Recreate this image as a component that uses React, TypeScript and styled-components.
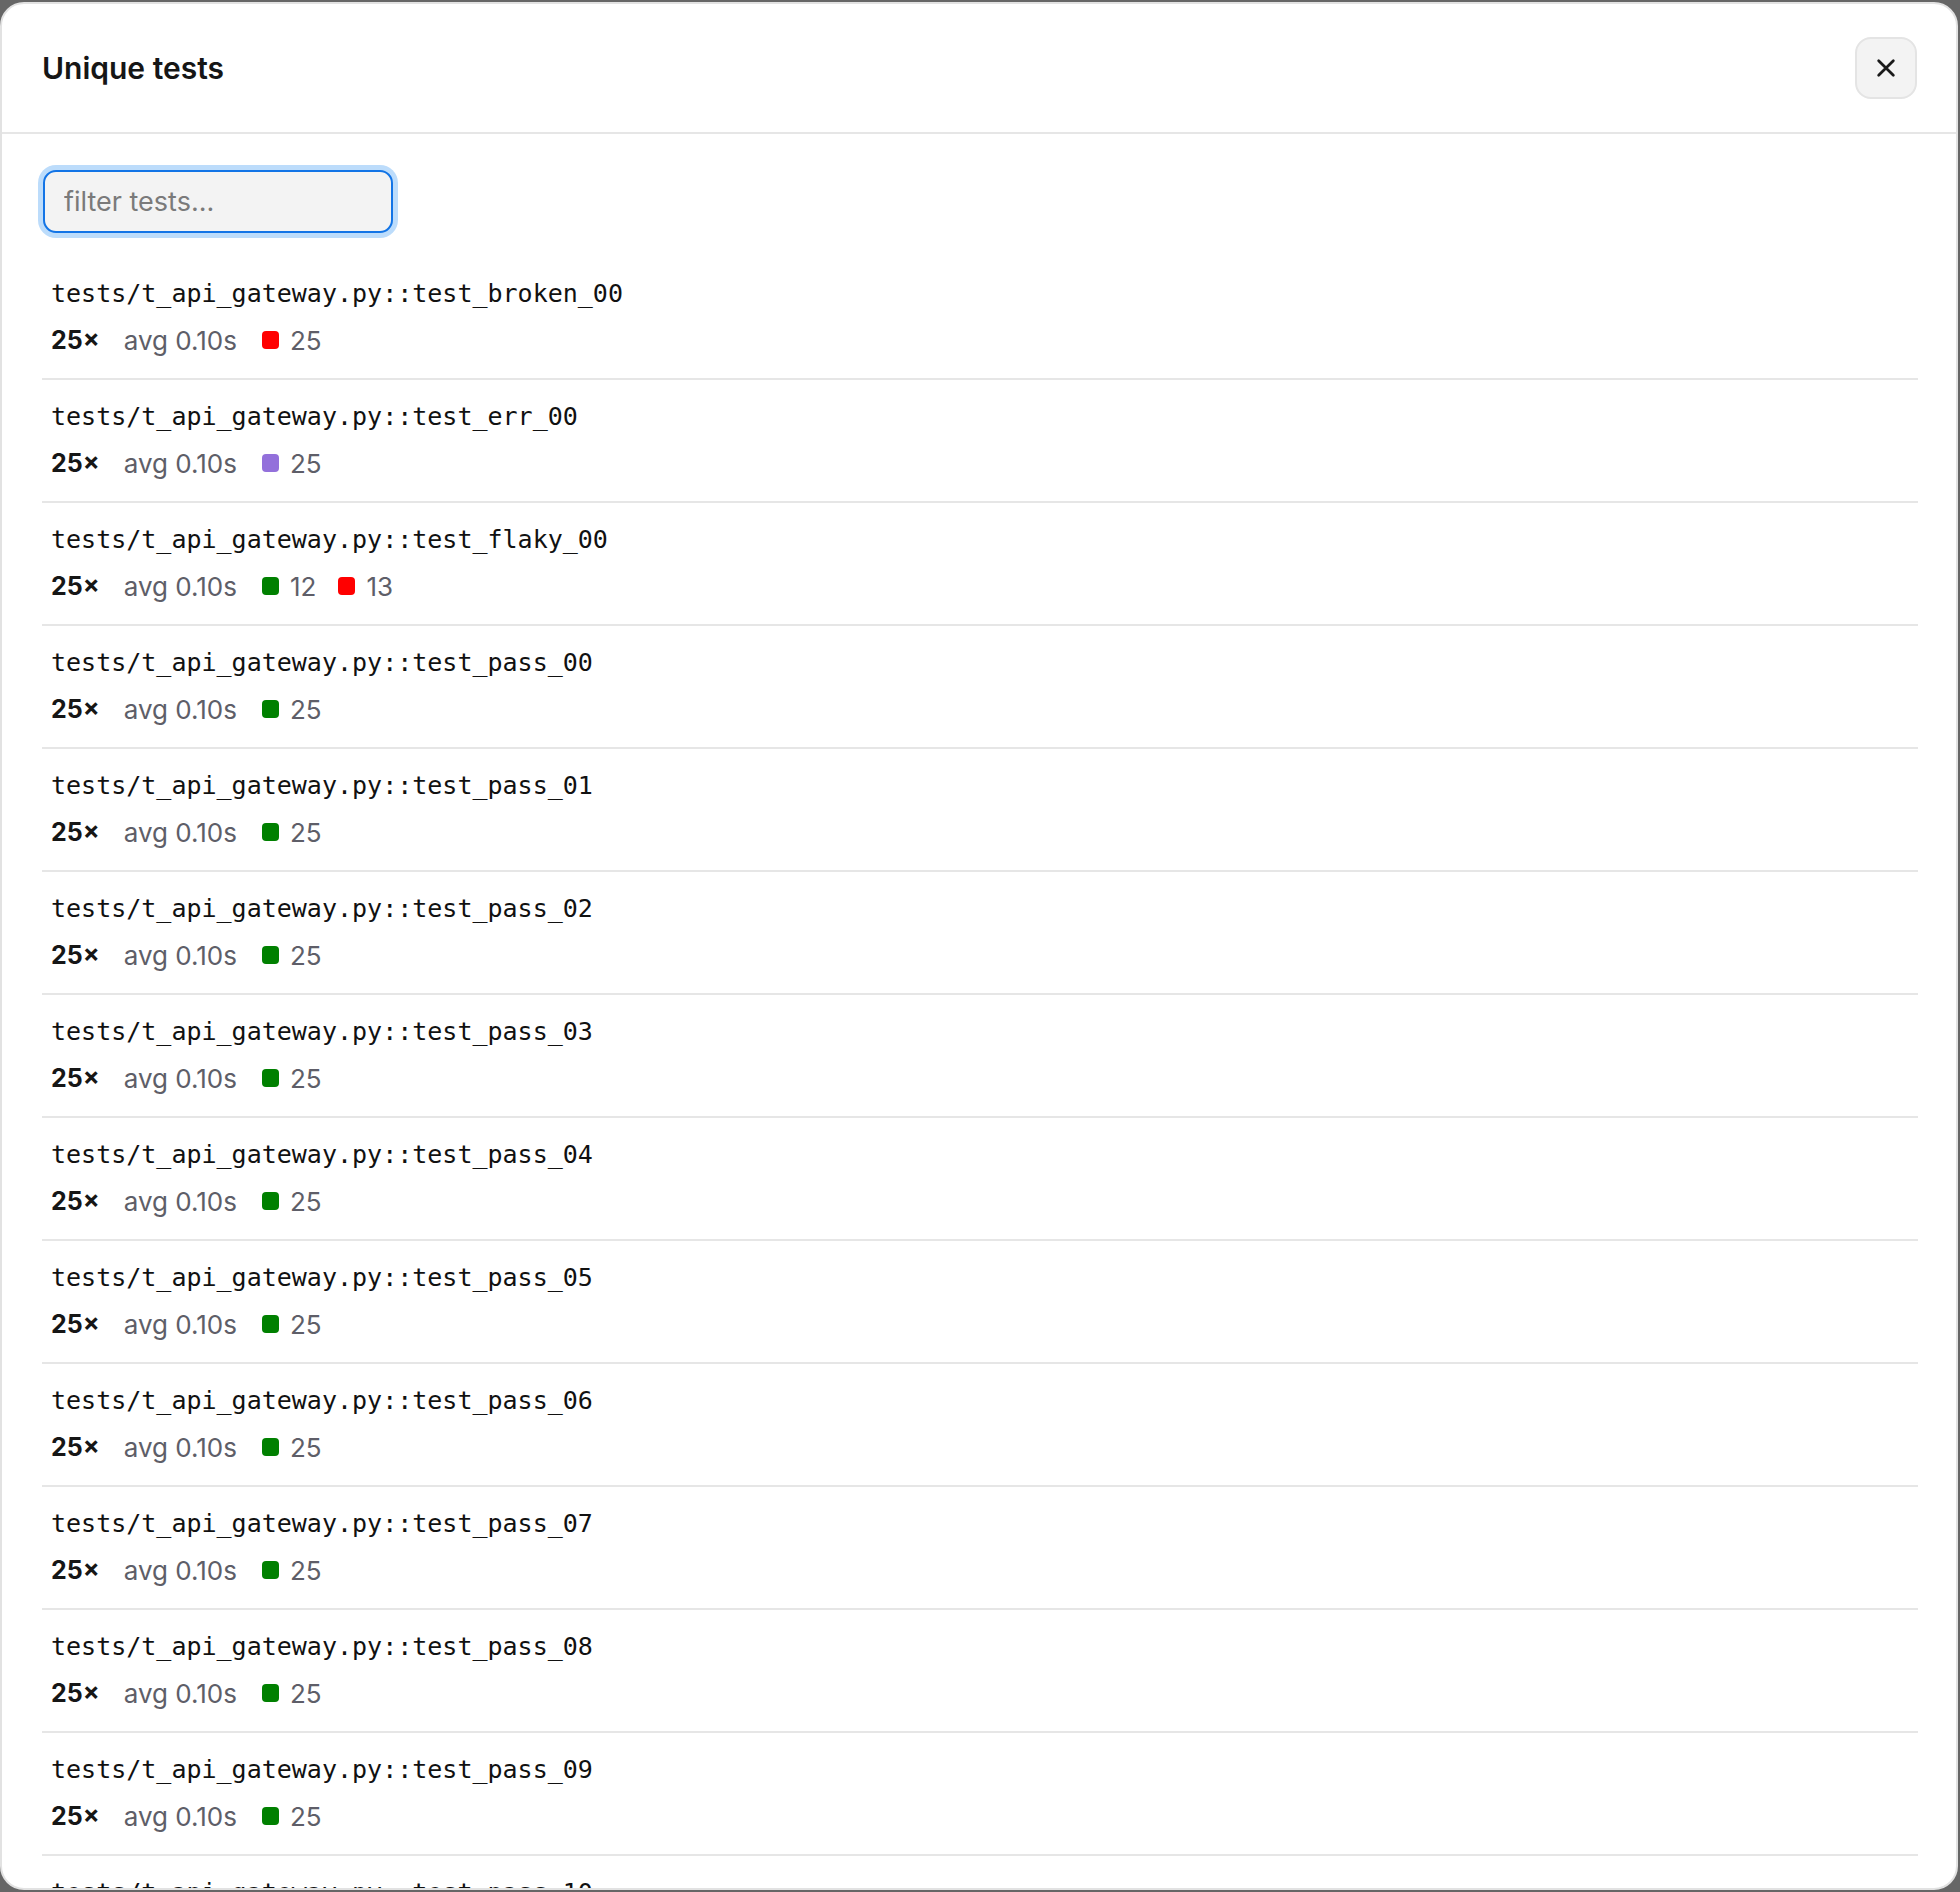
import styled, { createGlobalStyle } from "styled-components";

const GlobalStyle = createGlobalStyle`
  html, body {
    margin: 0;
    padding: 0;
    background: #666666;
  }

  body {
    font-family: Inter, "Noto Sans", "Liberation Sans", sans-serif;
    color: #1a1a1a;
  }
`;

const Backdrop = styled.div`
  padding: 2px 2px 2px 0;
  height: 1892px;
  box-sizing: border-box;
`;

const Dialog = styled.div`
  box-sizing: border-box;
  width: 1958px;
  height: 1888px;
  background: #ffffff;
  border: 2px solid #e2e2e2;
  border-radius: 24px;
  overflow: hidden;
  display: flex;
  flex-direction: column;
`;

const Header = styled.header`
  flex: none;
  height: 130px;
  box-sizing: border-box;
  display: flex;
  align-items: center;
  justify-content: space-between;
  padding: 0 39px 0 40px;
  border-bottom: 2px solid #e6e6e6;
`;

const Title = styled.h2`
  margin: 0;
  font-size: 30px;
  font-weight: 600;
  letter-spacing: 0;
  color: #161616;
`;

const CloseButton = styled.button`
  width: 62px;
  height: 62px;
  box-sizing: border-box;
  border: 2px solid #e4e4e4;
  border-radius: 16px;
  background: #f3f3f3;
  display: flex;
  align-items: center;
  justify-content: center;
  padding: 0;
  color: #1a1a1a;
  cursor: pointer;
`;

const Body = styled.div`
  flex: 1;
  padding: 36px 38px 0 40px;
`;

const FilterInput = styled.input`
  box-sizing: border-box;
  width: 350px;
  height: 63px;
  margin-left: 1px;
  padding: 0 19px;
  font-family: Inter, "Noto Sans", sans-serif;
  font-size: 27px;
  color: #1a1a1a;
  background: #f3f3f3;
  border: 2px solid #1274e6;
  border-radius: 13px;
  outline: none;
  box-shadow: 0 0 0 5px #bcdcfb;

  &::placeholder {
    color: #7a7a7a;
  }
`;

const List = styled.ul`
  list-style: none;
  margin: 24px 0 0;
  padding: 0;
`;

const Row = styled.li`
  padding: 21px 9px 22px;
  border-bottom: 2px solid #e6e6e6;
`;

const TestName = styled.div`
  font-family: "DejaVu Sans Mono", "Liberation Mono", monospace;
  font-size: 25px;
  line-height: 32px;
  color: #111111;
  white-space: nowrap;
`;

const Stats = styled.div`
  margin-top: 14px;
  display: flex;
  align-items: center;
  height: 32px;
  font-size: 26px;
  color: #5e5e68;
`;

const Runs = styled.span`
  font-weight: 700;
  font-size: 25px;
  color: #161616;
  margin-right: 24px;
`;

const Avg = styled.span`
  margin-right: 25px;
`;

const Outcome = styled.span`
  display: inline-flex;
  align-items: center;
  margin-right: 22px;
`;

const Swatch = styled.span<{ $color: string }>`
  width: 17px;
  height: 18px;
  border-radius: 4px;
  background: ${(p) => p.$color};
  margin-right: 11px;
`;

const COLORS = {
  pass: "#008000",
  fail: "#ff0000",
  error: "#9370db",
};

type Count = { kind: keyof typeof COLORS; n: number };

type Test = { name: string; runs: number; avg: string; counts: Count[] };

const tests: Test[] = [
  { name: "test_broken_00", runs: 25, avg: "0.10s", counts: [{ kind: "fail", n: 25 }] },
  { name: "test_err_00", runs: 25, avg: "0.10s", counts: [{ kind: "error", n: 25 }] },
  {
    name: "test_flaky_00",
    runs: 25,
    avg: "0.10s",
    counts: [
      { kind: "pass", n: 12 },
      { kind: "fail", n: 13 },
    ],
  },
  ...Array.from({ length: 13 }, (_, i) => ({
    name: `test_pass_${String(i).padStart(2, "0")}`,
    runs: 25,
    avg: "0.10s",
    counts: [{ kind: "pass" as const, n: 25 }],
  })),
];

function CloseIcon() {
  return (
    <svg width="22" height="22" viewBox="0 0 24 24" fill="none">
      <path
        d="M4 4L20 20M20 4L4 20"
        stroke="currentColor"
        strokeWidth="3"
        strokeLinecap="round"
      />
    </svg>
  );
}

export default function App() {
  return (
    <>
      <GlobalStyle />
      <Backdrop>
        <Dialog>
          <Header>
            <Title>Unique tests</Title>
            <CloseButton aria-label="Close">
              <CloseIcon />
            </CloseButton>
          </Header>

          <Body>
            <FilterInput placeholder="filter tests..." />

            <List>
              {tests.map((t) => (
                <Row key={t.name}>
                  <TestName>tests/t_api_gateway.py::{t.name}</TestName>
                  <Stats>
                    <Runs>{t.runs}×</Runs>
                    <Avg>avg {t.avg}</Avg>
                    {t.counts.map((c) => (
                      <Outcome key={c.kind}>
                        <Swatch $color={COLORS[c.kind]} />
                        {c.n}
                      </Outcome>
                    ))}
                  </Stats>
                </Row>
              ))}
            </List>
          </Body>
        </Dialog>
      </Backdrop>
    </>
  );
}
